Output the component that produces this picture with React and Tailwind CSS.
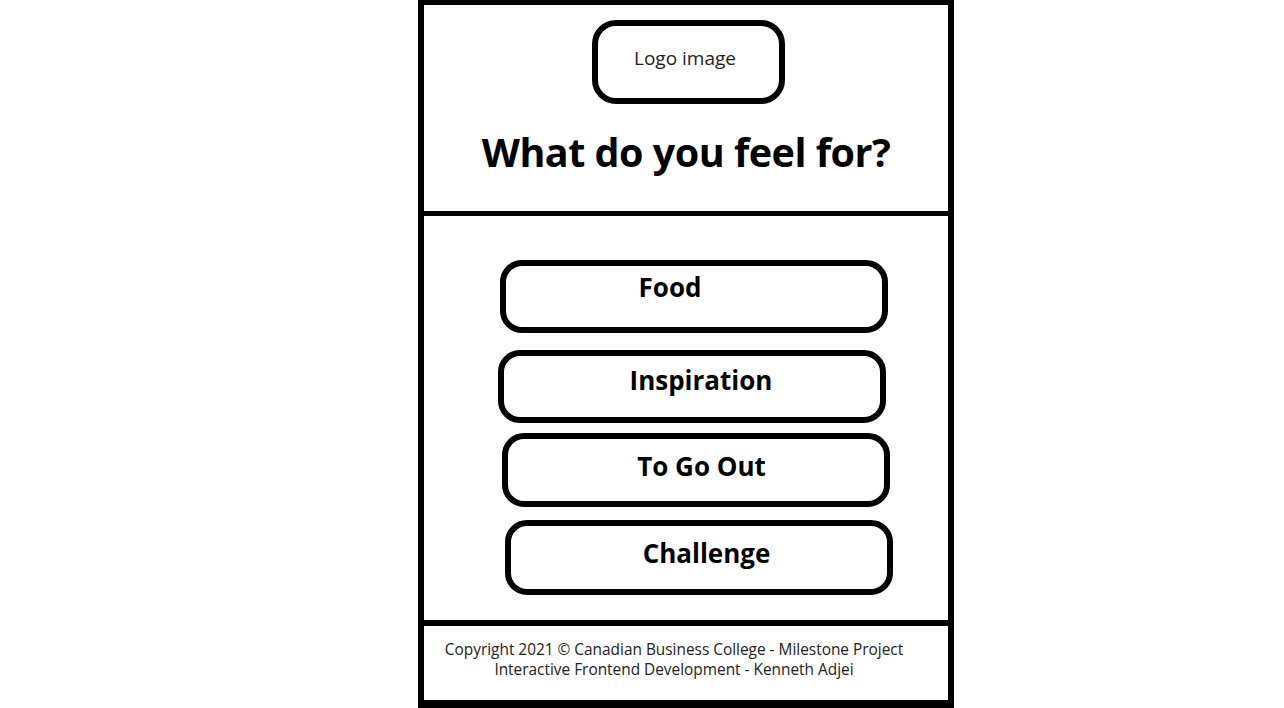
import React from 'react'

const choices = [
  { label: 'Food', ml: 'ml-[76px]', h: 'h-[73px]', pt: 'pt-[8px]', pad: 'pr-[48px]', mt: '' },
  { label: 'Inspiration', ml: 'ml-[74px]', h: 'h-[73px]', pt: 'pt-[11px]', pad: 'pl-[18px]', mt: 'mt-[17px]' },
  { label: 'To Go Out', ml: 'ml-[78px]', h: 'h-[74px]', pt: 'pt-[14px]', pad: 'pl-[11px]', mt: 'mt-[10px]' },
  { label: 'Challenge', ml: 'ml-[81px]', h: 'h-[75px]', pt: 'pt-[14px]', pad: 'pl-[15px]', mt: 'mt-[13px]' },
]

const font = { fontFamily: '"Open Sans", "Noto Sans", sans-serif' }

export default function App() {
  return (
    <div className="w-full h-[708px] overflow-hidden bg-white" style={font}>
      <div className="ml-[418px] w-[536px] h-[708px] border-x-[6px] border-t-[5px] border-b-[8px] border-black flex flex-col">

        {/* Header */}
        <div className="h-[211px] border-b-[5px] border-black flex flex-col items-center">
          <div className="mt-[15px] ml-[4px] w-[193px] h-[84px] border-[6px] border-black rounded-[24px] flex justify-center pt-[23px] pr-[6px]">
            <span className="text-[19px] leading-none text-[#222]">Logo image</span>
          </div>
          <h1 className="mt-[29px] text-[39.5px] leading-none font-bold text-black tracking-[-0.5px]">
            What do you feel for?
          </h1>
        </div>

        {/* Choices */}
        <div className="h-[410px] border-b-[6px] border-black pt-[44px] flex flex-col">
          {choices.map((c) => (
            <div
              key={c.label}
              className={`${c.ml} ${c.mt} ${c.h} w-[388px] border-[6px] border-black rounded-[22px] flex justify-center ${c.pt} ${c.pad}`}
            >
              <span className="text-[26px] leading-none font-bold text-black">{c.label}</span>
            </div>
          ))}
        </div>

        {/* Footer */}
        <div className="flex-1 pt-[14px] pr-[24px] text-center text-[15.4px] leading-[20px] text-[#222]">
          <p>Copyright 2021 © Canadian Business College - Milestone Project</p>
          <p>Interactive Frontend Development - Kenneth Adjei</p>
        </div>
      </div>
    </div>
  )
}
